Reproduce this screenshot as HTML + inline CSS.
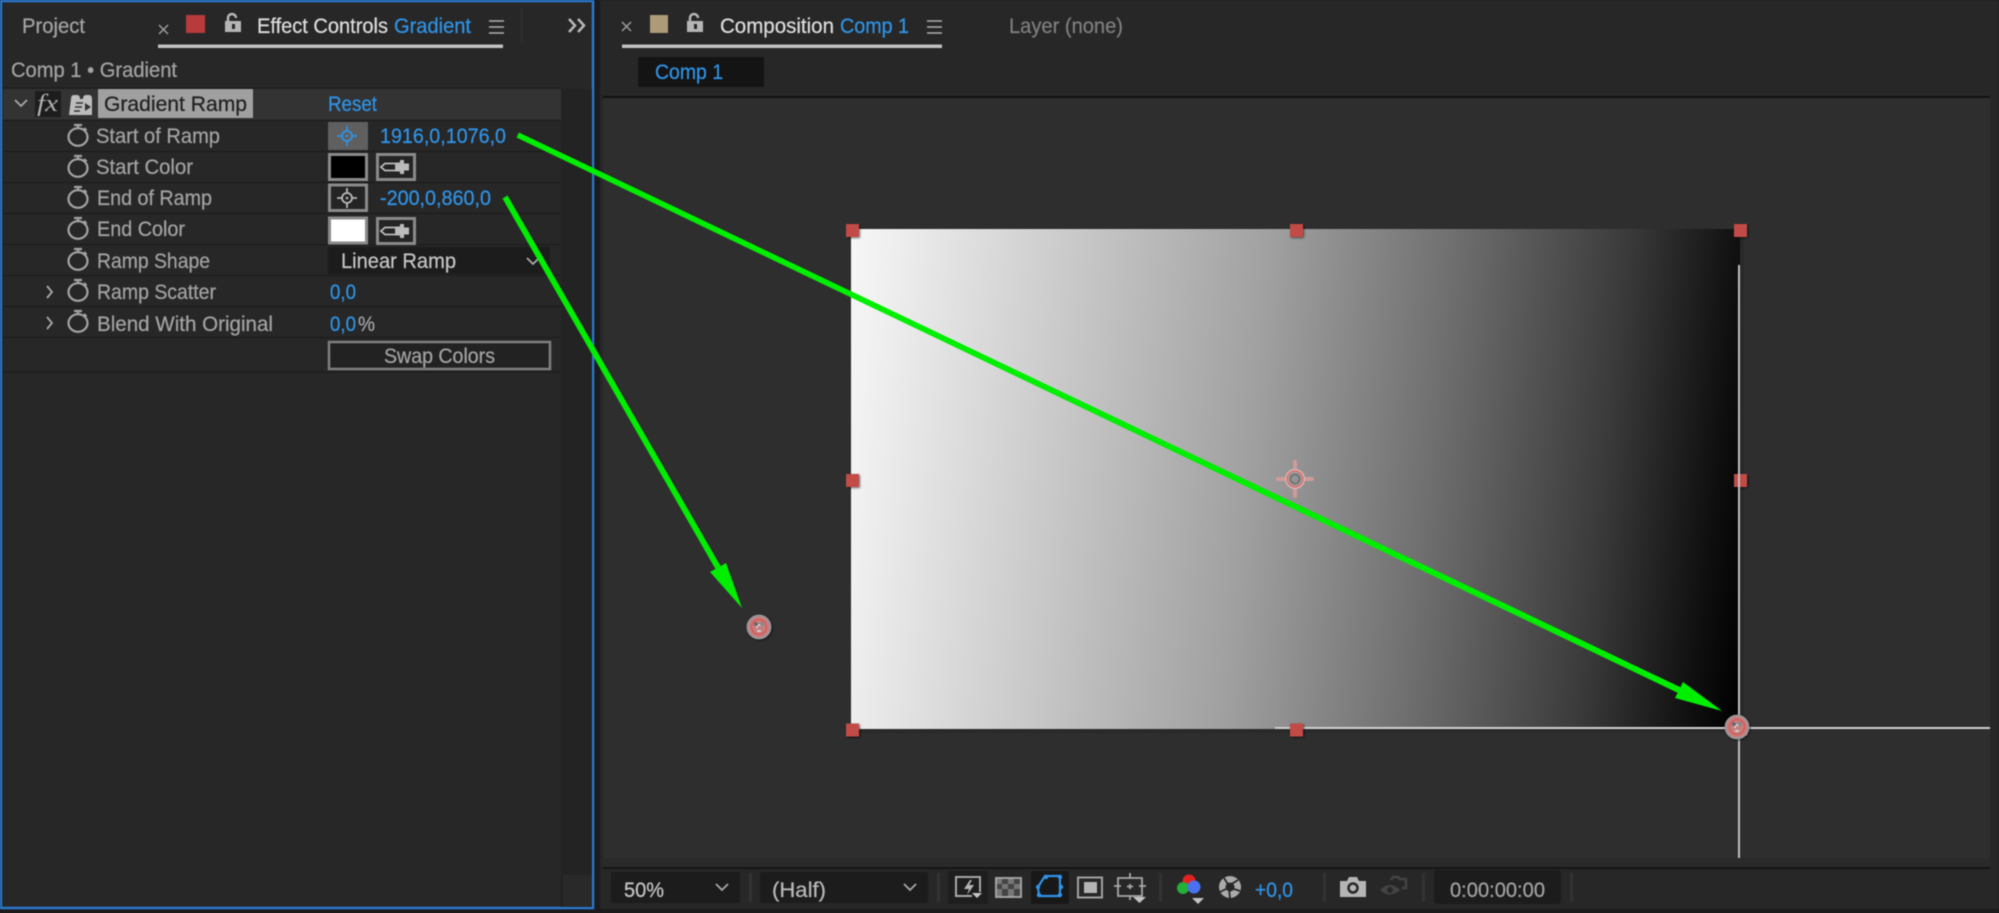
<!DOCTYPE html>
<html><head><meta charset="utf-8"><style>
html,body{margin:0;padding:0;background:#1b1b1b;width:1999px;height:913px;overflow:hidden}
svg{display:block;position:absolute;left:0;top:0;filter:blur(.5px)}
text{font-family:"Liberation Sans",sans-serif;font-size:21px;fill:#a2a2a2;stroke:#a2a2a2;stroke-width:.25px}
.b{fill:#2f93e6;stroke:#2f93e6}.w{fill:#dcdcdc;stroke:#dcdcdc}
</style></head><body>
<svg width="1999" height="913" viewBox="0 0 1999 913" xmlns="http://www.w3.org/2000/svg">
<defs>
<linearGradient id="g" gradientUnits="userSpaceOnUse" x1="1737" y1="727" x2="759" y2="627">
<stop offset="0" stop-color="#000"/><stop offset=".05" stop-color="#101010"/><stop offset=".16" stop-color="#3a3a3a"/><stop offset=".34" stop-color="#707070"/><stop offset=".52" stop-color="#a0a0a0"/><stop offset=".75" stop-color="#cfcfcf"/><stop offset=".91" stop-color="#f0f0f0"/><stop offset="1" stop-color="#fff"/>
</linearGradient>
<g id="sw" fill="none" stroke="#a3a3a3" stroke-width="2.200"><ellipse cx="0" cy="1" rx="9.500" ry="8.800"/><path d="M-4-11H4M0-11V-7.500M6-8l2.500 2.500"/></g>
<g id="dr"><rect x="1.500" y="1.500" width="37" height="25" fill="#242424" stroke="#8a8a8a" stroke-width="3"/><path d="M5 14l4-3.500H20v7H9z" fill="none" stroke="#bbb" stroke-width="1.800"/><path d="M20 9.500h4v-2.500h4v3.500h5v7h-5v3.500h-4v-2.500h-4z" fill="#bbb"/></g>
<g id="t"><rect x="-6.500" y="-6.500" width="13" height="13" fill="#c34b47"/></g>
<g id="c" fill="none"><circle r="11.500" fill="#c47f7f" stroke="#999" stroke-width="1.800"/><circle r="7.500" stroke="#e25050" stroke-width="1.200"/><path d="M-4-2h8M-2-5v6M-2 4h4" stroke="#ddd" stroke-width="1.500"/><circle cx="-3" cy="-3" r="2" fill="#666"/><circle cx="3" cy="-3" r="2" fill="#888"/></g>
</defs>

<rect width="1999" height="913" fill="#1b1b1b"/>

<!-- left panel -->
<rect x="3" y="2" width="589" height="905" fill="#272727"/>
<rect x="1" y="1" width="592" height="907" fill="none" stroke="#2a79cf" stroke-width="2.500"/>
<text x="22" y="33" textLength="63" lengthAdjust="spacingAndGlyphs">Project</text>
<path d="M159 25l9 9M168 25l-9 9" stroke="#9c9c9c" stroke-width="1.500"/>
<rect x="186" y="15" width="19" height="18" fill="#b93a3a"/>
<path d="M228 21v-3a4 4 0 0 1 8 0" fill="none" stroke="#b5b5b5" stroke-width="2.500"/><rect x="225" y="21" width="16" height="11" fill="#b5b5b5"/><rect x="232" y="24" width="3" height="5" fill="#272727"/>
<text x="257" y="33" class="w" textLength="131" lengthAdjust="spacingAndGlyphs">Effect Controls</text>
<text x="394" y="33" class="b" textLength="77" lengthAdjust="spacingAndGlyphs">Gradient</text>
<path d="M489 21h15M489 27h15M489 33h15" stroke="#b0b0b0" stroke-width="1.500"/>
<rect x="158" y="44.500" width="345" height="3.500" fill="#c2c2c2"/>
<rect x="521" y="8" width="1.500" height="36" fill="#2f2f2f"/>
<path d="M569 19l6 6.500-6 6.500M578 19l6 6.500-6 6.500" fill="none" stroke="#b8b8b8" stroke-width="2.500"/>
<text x="11" y="77" textLength="166" lengthAdjust="spacingAndGlyphs">Comp 1 • Gradient</text>

<!-- rows -->
<rect x="3" y="87" width="558" height="2" fill="#202020"/>
<rect x="3" y="89" width="558" height="31" fill="#333"/>
<rect x="561" y="89" width="31" height="786" fill="#232323"/>
<rect x="561" y="875" width="31" height="32" fill="#292929"/>
<rect x="561" y="875" width="1.500" height="32" fill="#1f1f1f"/>
<path d="M3 120.500H561M3 151.500H561M3 182.500H561M3 213.500H561M3 244.500H561M3 275.500H561M3 306.500H561M3 337.500H561M3 372H561" stroke="#1e1e1e" stroke-width="1.500"/>

<path d="M15 100l6 6 6-6" fill="none" stroke="#a8a8a8" stroke-width="1.800"/>
<rect x="35" y="91" width="26" height="26" fill="#1d1d1d"/>
<text x="37" y="111" style="font-family:'Liberation Serif',serif;font-style:italic;font-size:24px;fill:#b0b0b0;stroke:none" textLength="21" lengthAdjust="spacingAndGlyphs">fx</text>
<path d="M71 99q0-4 3-4h3q3 0 3 4h3q0-4 3-4h3q3 0 3 4v16h-23z" fill="#bdbdbd"/>
<path d="M76 103h7M75 107h7M74 111h6" stroke="#333" stroke-width="1.500"/><path d="M85 103l6 4-6 4z" fill="#333"/>
<rect x="98" y="89" width="155" height="29" fill="#a0a0a0"/>
<text x="104" y="111" style="fill:#222;stroke:#222" textLength="143" lengthAdjust="spacingAndGlyphs">Gradient Ramp</text>
<text x="328" y="111" class="b" textLength="49" lengthAdjust="spacingAndGlyphs">Reset</text>

<use href="#sw" x="78" y="136"/><use href="#sw" x="78" y="167"/><use href="#sw" x="78" y="198"/><use href="#sw" x="78" y="229"/><use href="#sw" x="78" y="260"/><use href="#sw" x="78" y="291"/><use href="#sw" x="78" y="322"/>
<path d="M47 286l5 6-5 6M47 317l5 6-5 6" fill="none" stroke="#a8a8a8" stroke-width="1.800"/>

<text x="96" y="143" textLength="124" lengthAdjust="spacingAndGlyphs">Start of Ramp</text>
<text x="96" y="174" textLength="97" lengthAdjust="spacingAndGlyphs">Start Color</text>
<text x="97" y="205" textLength="115" lengthAdjust="spacingAndGlyphs">End of Ramp</text>
<text x="97" y="236" textLength="88" lengthAdjust="spacingAndGlyphs">End Color</text>
<text x="97" y="268" textLength="113" lengthAdjust="spacingAndGlyphs">Ramp Shape</text>
<text x="97" y="299" textLength="119" lengthAdjust="spacingAndGlyphs">Ramp Scatter</text>
<text x="97" y="331" textLength="176" lengthAdjust="spacingAndGlyphs">Blend With Original</text>

<rect x="328" y="122" width="40" height="28" fill="#5f5f5f"/>
<g fill="none" stroke="#2f93e6" stroke-width="1.800"><circle cx="347" cy="136" r="5"/><path d="M347 126v5M347 141v5M337 136h5M352 136h5"/></g><circle cx="347" cy="136" r="1.300" fill="#2f93e6"/>
<text x="380" y="143" class="b" textLength="126" lengthAdjust="spacingAndGlyphs">1916,0,1076,0</text>
<rect x="329.500" y="154.500" width="37" height="25" fill="#000" stroke="#8a8a8a" stroke-width="3"/>
<use href="#dr" x="376" y="153"/>
<rect x="329.500" y="185" width="37" height="25.500" fill="#242424" stroke="#8a8a8a" stroke-width="3"/>
<g fill="none" stroke="#b8b8b8" stroke-width="1.800"><circle cx="347" cy="198" r="5"/><path d="M347 188v5M347 203v5M337 198h5M352 198h5"/></g><circle cx="347" cy="198" r="1.300" fill="#b8b8b8"/>
<text x="380" y="205" class="b" textLength="111" lengthAdjust="spacingAndGlyphs">-200,0,860,0</text>
<rect x="329.500" y="218" width="37" height="25" fill="#fff" stroke="#8a8a8a" stroke-width="3"/>
<use href="#dr" x="376" y="217"/>
<rect x="328" y="247" width="222" height="27" fill="#1c1c1c"/>
<text x="341" y="268" style="fill:#c4c4c4;stroke:#c4c4c4" textLength="115" lengthAdjust="spacingAndGlyphs">Linear Ramp</text>
<path d="M527 258l6 6 6-6" fill="none" stroke="#a8a8a8" stroke-width="1.800"/>
<text x="330" y="299" class="b" textLength="26" lengthAdjust="spacingAndGlyphs">0,0</text>
<text x="330" y="331" class="b" textLength="26" lengthAdjust="spacingAndGlyphs">0,0</text>
<text x="358" y="331" textLength="17" lengthAdjust="spacingAndGlyphs">%</text>
<rect x="329" y="342" width="221" height="27" fill="#222" stroke="#808080" stroke-width="2.500"/>
<text x="384" y="363" textLength="111" lengthAdjust="spacingAndGlyphs">Swap Colors</text>

<!-- right panel -->
<rect x="600" y="0" width="1399" height="909" fill="#272727"/>
<path d="M622 22l9 9M631 22l-9 9" stroke="#9c9c9c" stroke-width="1.500"/>
<rect x="650" y="15" width="18" height="18" fill="#ad9b78"/>
<path d="M690 21v-3a4 4 0 0 1 8 0" fill="none" stroke="#b5b5b5" stroke-width="2.500"/><rect x="687" y="21" width="16" height="11" fill="#b5b5b5"/><rect x="694" y="24" width="3" height="5" fill="#272727"/>
<text x="720" y="33" class="w" textLength="114" lengthAdjust="spacingAndGlyphs">Composition</text>
<text x="840" y="33" class="b" textLength="69" lengthAdjust="spacingAndGlyphs">Comp 1</text>
<path d="M927 21h15M927 27h15M927 33h15" stroke="#b0b0b0" stroke-width="1.500"/>
<rect x="622" y="44.500" width="320" height="3.500" fill="#c2c2c2"/>
<text x="1009" y="33" style="fill:#7e7e7e;stroke:#7e7e7e" textLength="114" lengthAdjust="spacingAndGlyphs">Layer (none)</text>
<rect x="638" y="57" width="126" height="30" rx="2" fill="#141414"/>
<text x="655" y="79" class="b" textLength="68" lengthAdjust="spacingAndGlyphs">Comp 1</text>
<rect x="603" y="96" width="1387" height="2" fill="#111"/>

<!-- viewer -->
<rect x="603" y="98" width="1387" height="760" fill="#2e2e2e"/>
<rect x="603" y="858" width="1387" height="9" fill="#2a2a2a"/>
<rect x="603" y="867" width="1387" height="2" fill="#151515"/>
<rect x="855" y="233" width="889" height="500" fill="#222" opacity=".4"/>
<rect x="851" y="229" width="889" height="500" fill="url(#g)"/>
<rect x="1275" y="727" width="715" height="2" fill="#d0d0d0"/>
<rect x="1738" y="265" width="2" height="593" fill="#c0c0c0"/>

<g style="filter:drop-shadow(1.500px 1.500px 1px rgba(0,0,0,.55))">
<use href="#t" x="852.500" y="230.500"/><use href="#t" x="1296.500" y="230.500"/><use href="#t" x="1740.500" y="230.500"/>
<use href="#t" x="852.500" y="480.500"/><use href="#t" x="1740.500" y="480.500"/>
<use href="#t" x="852.500" y="730"/><use href="#t" x="1296.500" y="730"/><use href="#t" x="1741" y="729"/>
<use href="#c" x="759" y="627"/><use href="#c" x="1737" y="727"/>
</g>
<rect x="1738" y="465" width="2" height="30" fill="#c0c0c0"/>
<g fill="none" transform="translate(1295 479)">
<path d="M0-17V-9M0 9V17M-17 0H-9M9 0H17" stroke="#d09a9a" stroke-width="4" stroke-linecap="round"/>
<circle r="8.500" stroke="#d9b5b5" stroke-width="3"/><circle r="8" stroke="#e05555" stroke-width="1"/><circle r="4.500" stroke="#666" stroke-width="1.200"/>
</g>

<!-- arrows -->
<g fill="#00ee00">
<polygon points="519,132.500 1680.500,687.300 1677.500,692.700 516.500,137.500"/>
<polygon points="1722,711 1683,682 1675,698"/>
<polygon points="507.500,195.500 720.500,566 715.500,569 502.500,198.500"/>
<polygon points="742,608 710,572 726,563"/>
</g>

<!-- toolbar -->
<rect x="611" y="872" width="129" height="31" rx="2" fill="#1c1c1c"/>
<text x="624" y="897" style="fill:#c4c4c4;stroke:#c4c4c4" textLength="40" lengthAdjust="spacingAndGlyphs">50%</text>
<path d="M716 884l6 6 6-6" fill="none" stroke="#a8a8a8" stroke-width="1.800"/>
<rect x="749" y="873" width="3" height="29" fill="#333"/>
<rect x="760" y="872" width="168" height="31" rx="2" fill="#1c1c1c"/>
<text x="772" y="897" style="fill:#b8b8b8;stroke:#b8b8b8" textLength="54" lengthAdjust="spacingAndGlyphs">(Half)</text>
<path d="M904 884l6 6 6-6" fill="none" stroke="#a8a8a8" stroke-width="1.800"/>
<rect x="937" y="873" width="3" height="29" fill="#333"/>
<rect x="948" y="871" width="40" height="33" rx="2" fill="#1e1e1e"/>
<path d="M980 892V877H956V896H972" fill="none" stroke="#a8a8a8" stroke-width="2"/>
<path d="M970 880l-6 9h5l-2 6 7-10h-5l3-5z" fill="#b5b5b5"/><path d="M972 893h10l-5 5z" fill="#c8c8c8"/>
<rect x="996" y="878" width="25" height="19" fill="#777" stroke="#a2a2a2" stroke-width="2"/>
<path d="M1002 879h6v5h-6zM1014 879h6v5h-6zM1008 884h6v5h-6zM997 884h5v5h-5zM1002 889h6v7h-6zM1014 889h6v7h-6z" fill="#444"/>
<rect x="1031" y="871" width="38" height="33" rx="2" fill="#181818"/>
<path d="M1038 887l7-11h15v20h-21z" fill="none" stroke="#2f93e6" stroke-width="2.200"/>
<g fill="#2f93e6"><circle cx="1038" cy="887" r="2.200"/><circle cx="1046" cy="877" r="2.200"/><circle cx="1060" cy="877" r="2.200"/><circle cx="1061" cy="887" r="2.200"/><circle cx="1060" cy="895" r="2.200"/><circle cx="1039" cy="895" r="2.200"/></g>
<rect x="1078" y="877.500" width="24" height="20" fill="none" stroke="#a2a2a2" stroke-width="2"/>
<rect x="1084" y="882" width="13" height="11" fill="#b5b5b5"/>
<path d="M1118 878h24v18h-24zM1130 873v5M1130 896v4M1114 886h7M1139 886h7M1130 884v5M1127 886.500h6" fill="none" stroke="#a8a8a8" stroke-width="1.800"/>
<path d="M1133 897h13l-6.500 6z" fill="#c4c4c4"/>
<rect x="1159" y="873" width="3" height="29" fill="#333"/>
<circle cx="1189" cy="881" r="6.500" fill="#e3231e"/><circle cx="1183" cy="888" r="6" fill="#22b036"/><circle cx="1194" cy="887" r="6.500" fill="#4a72f0"/>
<path d="M1192 898h12l-6 6z" fill="#c4c4c4"/>
<circle cx="1230" cy="887" r="11" fill="#aaa"/><circle cx="1230" cy="887" r="4.500" fill="#272727"/><path d="M1224 878l5 8M1238 880l-8 5M1240 891l-9-3M1230 898l-1-9M1220 892l8-4" stroke="#272727" stroke-width="1.800"/>
<text x="1255" y="897" class="b" textLength="38" lengthAdjust="spacingAndGlyphs">+0,0</text>
<rect x="1323" y="873" width="3" height="29" fill="#333"/>
<path d="M1340 881h7l2-4h8l2 4h7v16h-26z" fill="#b5b5b5"/><circle cx="1353" cy="888" r="4.500" fill="#b5b5b5" stroke="#272727" stroke-width="2.500"/>
<path d="M1380 890q10-10 20 0q-10 9-20 0z" fill="#444"/><circle cx="1390" cy="890" r="3" fill="#272727"/><path d="M1391 880l2-3h5l2 2h6v9h-4" fill="none" stroke="#444" stroke-width="2.500"/>
<rect x="1422" y="873" width="3" height="29" fill="#333"/>
<rect x="1434" y="870" width="127" height="34" rx="3" fill="#1c1c1c"/>
<text x="1450" y="897" textLength="95" lengthAdjust="spacingAndGlyphs">0:00:00:00</text>
<rect x="1570" y="873" width="3" height="29" fill="#333"/>
</svg>
</body></html>
